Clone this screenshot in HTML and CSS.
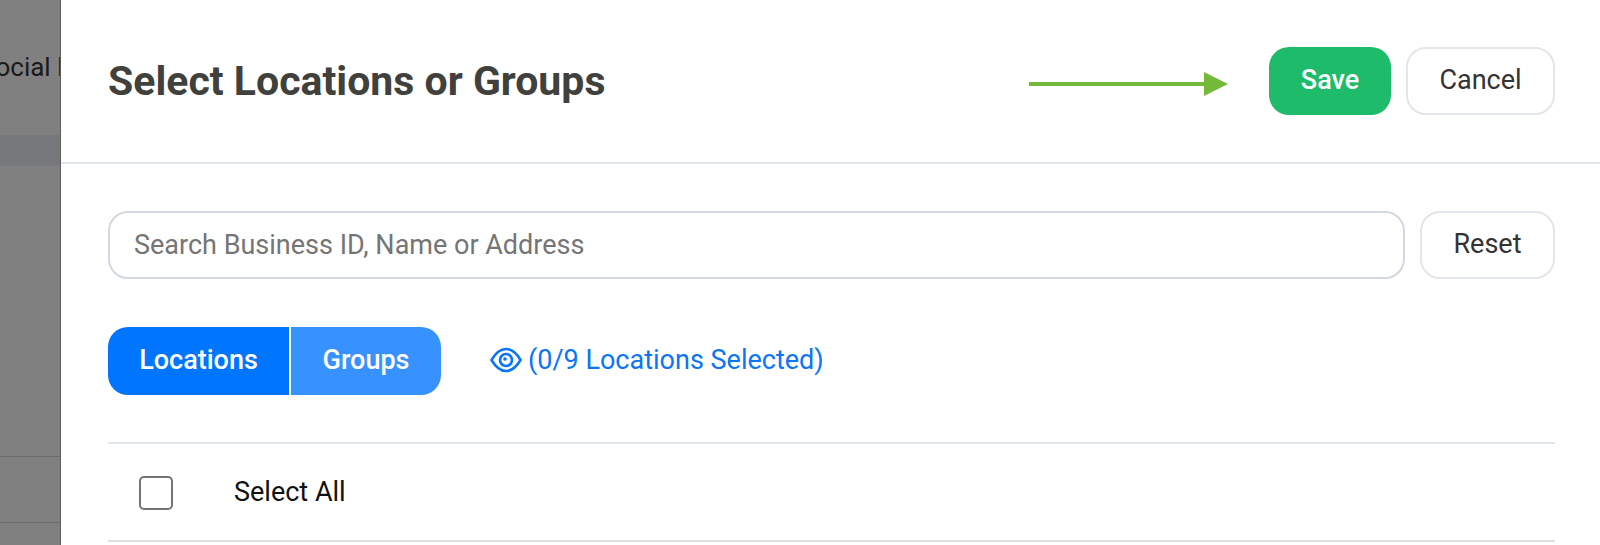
FILE: index.html
```html
<!DOCTYPE html>
<html lang="en">
<head>
  <meta charset="UTF-8">
  <meta name="viewport" content="width=device-width, initial-scale=1.0">
  <title>Select Locations or Groups</title>
  <link rel="stylesheet" href="styles.css">
</head>
<body>
<div class="backdrop">
  <div class="backdrop-label">Social M</div>
  <div class="backdrop-band"></div>
  <div class="backdrop-row"></div>
  <div class="backdrop-row backdrop-row-last"></div>
</div>

<div class="panel">
  <div class="panel-header">
    <h1 class="panel-title">Select Locations or Groups</h1>
    <svg class="arrow" width="200" height="26" viewBox="0 0 200 26">
      <rect x="0" y="11" width="176" height="4" fill="#74b93a"></rect>
      <polygon points="175,1 199,13 175,25" fill="#74b93a"></polygon>
    </svg>
    <button class="button button-save">Save</button>
    <button class="button">Cancel</button>
  </div>

  <div class="panel-body">
    <div class="search-row">
      <input class="search-input" type="text" placeholder="Search Business ID, Name or Address">
      <button class="button button-reset">Reset</button>
    </div>

    <div class="tab-row">
      <div class="tabs">
        <div class="tab tab-active">Locations</div>
        <div class="tab">Groups</div>
      </div>
      <div class="selected-link">
        <svg class="eye" width="32" height="26" viewBox="0 0 32 26" fill="none" stroke="#0a75f5" stroke-width="2.6">
          <path d="M1.5 13 C6.5 4.5 11 2 16 2 C21 2 25.5 4.5 30.5 13 C25.5 21.5 21 24 16 24 C11 24 6.5 21.5 1.5 13 Z"></path>
          <circle cx="16" cy="13" r="6"></circle>
          <circle cx="15" cy="12" r="1.8" fill="#0a75f5" stroke="none"></circle>
        </svg>
        <span>(0/9 Locations Selected)</span>
      </div>
    </div>

    <div class="select-all">
      <span class="checkbox"></span>
      <span class="select-label">Select All</span>
    </div>
  </div>
</div>
</body>
</html>
```

FILE: styles.css
```css
html, body {
  height: 100%;
}
body {
  display: flex;
  height: 545px;
  margin: 0;
  overflow: hidden;
  background-color: #fff;
  font-family: Roboto, Arial, sans-serif;
}
.backdrop {
  width: 60px;
  flex-shrink: 0;
  height: 545px;
  overflow: hidden;
  background-color: #808080;
  border-right: 1px solid #5d5d5d;
}
.backdrop-label {
  margin-left: -20px;
  padding-top: 52px;
  height: 135px;
  box-sizing: border-box;
  font-size: 26px;
  line-height: 30px;
  white-space: nowrap;
  color: #1a1a1a;
}
.backdrop-band {
  height: 31px;
  background-color: #76787b;
}
.backdrop-row {
  height: 290px;
  border-bottom: 1px solid #6c6c6c;
}
.backdrop-row-last {
  height: 65px;
}
.panel {
  flex: 1;
  min-width: 0;
}
.panel-header {
  display: flex;
  align-items: center;
  height: 162px;
  padding: 0 45px 0 47px;
  border-bottom: 2px solid #e2e6eb;
}
.panel-title {
  flex: 1;
  margin: 0;
  font-size: 41px;
  font-weight: 700;
  color: #40403c;
}
.arrow {
  margin: 6px 40px 0 0;
}
.button {
  height: 68px;
  width: 149px;
  margin-left: 15px;
  padding: 0 0 2px;
  border: 2px solid #e2e6eb;
  border-radius: 20px;
  background-color: #fff;
  font-family: Roboto, Arial, sans-serif;
  font-size: 27px;
  color: #333;
}
.button-save {
  width: 122px;
  margin-left: 0;
  border: none;
  background-color: #1ebc6a;
  color: #fff;
  font-weight: 500;
}
.panel-body {
  padding: 47px 45px 0 47px;
}
.search-row {
  display: flex;
}
.search-input {
  flex: 1;
  height: 68px;
  box-sizing: border-box;
  padding: 0 24px 1px;
  border: 2px solid #d3d7e0;
  border-radius: 20px;
  font-family: Roboto, Arial, sans-serif;
  font-size: 27px;
}
.search-input::placeholder {
  color: #757575;
}
.button-reset {
  width: 135px;
}
.tab-row {
  display: flex;
  align-items: center;
  margin-top: 48px;
}
.tabs {
  display: flex;
  height: 68px;
  width: 333px;
}
.tab {
  display: flex;
  align-items: center;
  justify-content: center;
  flex: 1;
  padding-bottom: 2px;
  box-sizing: border-box;
  border-radius: 0 20px 20px 0;
  background-color: #3792ff;
  font-size: 27px;
  font-weight: 500;
  color: #fff;
}
.tab-active {
  flex: none;
  width: 181px;
  margin-right: 2px;
  border-radius: 20px 0 0 20px;
  background-color: #0075ff;
}
.selected-link {
  display: flex;
  align-items: center;
  gap: 6px;
  margin-left: 49px;
  padding-bottom: 2px;
  font-size: 27px;
  color: #0a75f5;
}
.select-all {
  display: flex;
  align-items: center;
  height: 96px;
  margin-top: 47px;
  padding-left: 31px;
  border-top: 2px solid #e2e6eb;
  border-bottom: 2px solid #e0e0e0;
}
.checkbox {
  width: 30px;
  height: 30px;
  margin-top: 2px;
  border: 2px solid #757575;
  border-radius: 5px;
}
.select-label {
  margin-left: 61px;
  font-size: 27px;
  color: #111;
}
```
